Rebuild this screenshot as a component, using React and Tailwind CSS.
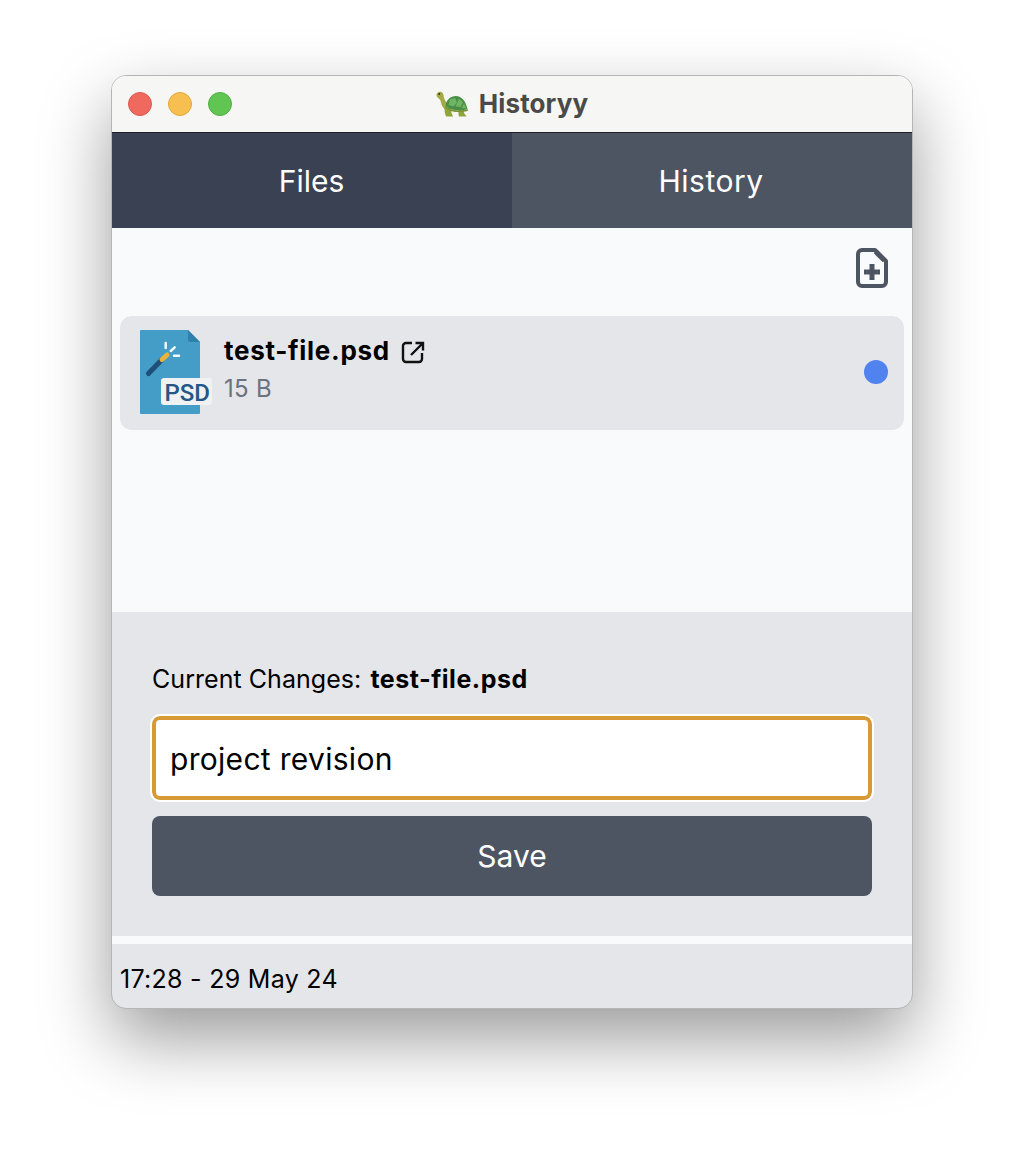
import { useState } from 'react';

function Turtle() {
  return (
    <svg width="32" height="26" viewBox="0 0 32 26" className="shrink-0">
      <path d="M.5 3.500C1 1.500 3.500 0 5.500 1c2 1 2 3 2.300 5 .4 2.500 2 4.500 3.700 6.500l-2 6.500c-3-2.500-4.500-6-5-9.500C3.500 7.500 0 6 .5 3.500z" fill="#a3ab45" />
      <path d="M8.500 17l6-1 1 6 1.500 3.500H10c-1-2.500-1.500-5-1.500-8.500zM22.500 18l5-.5.500 4.500 2.500 3.500H23c-.8-2.500-.5-5-.5-7.500z" fill="#8ca63c" />
      <path d="M9.500 15C10 9 14.500 5 20 5c5.500 0 9.500 5 11.500 13-7 2.500-15.500 2-22-3z" fill="#478f45" />
      <path d="M14 8.500l5-1.500 2 4.500-3.500 4-5-1.500zM23 7.500l4 4-2.500 4.500-5-.5 2-4zM28 12.500l2.500 5-5-.5z" fill="#6fb564" />
      <path d="M9.500 15c6.500 5 15 5.500 22 3l.5 2c-8 2-17 1.500-23-3z" fill="#7d9433" />
      <circle cx="3.300" cy="3" r=".9" fill="#222" />
    </svg>
  );
}

function PsdIcon() {
  return (
    <svg width="72" height="84" viewBox="0 0 72 84" className="shrink-0 font-[Roboto]">
      <path d="M1 0h47l12 12v71a1 1 0 0 1-1 1H1a1 1 0 0 1-1-1V1a1 1 0 0 1 1-1z" fill="#439dc7" />
      <path d="M48 0l12 12H50a2 2 0 0 1-2-2z" fill="#2f81ab" />
      <path d="M8.500 43.500L21.500 30" stroke="#1f4e79" strokeWidth="5" strokeLinecap="round" />
      <path d="M22 29.500L27 25" stroke="#eab33c" strokeWidth="5" strokeLinecap="round" />
      <path d="M25.700 13v5M30.700 21l4-3.700M34 25.700h5" stroke="#f4f7f9" strokeWidth="2.500" strokeLinecap="round" />
      <rect x="21" y="48" width="51" height="27" rx="3" fill="#eff1f3" />
      <text x="24.500" y="70.500" fontSize="24" fontWeight="500" fill="#235785">PSD</text>
    </svg>
  );
}

function NewFileIcon() {
  return (
    <svg width="32" height="40" viewBox="0 0 32 40" fill="none">
      <path d="M6 2h13l11 11v21a4 4 0 0 1-4 4H6a4 4 0 0 1-4-4V6a4 4 0 0 1 4-4z" stroke="#4e5562" strokeWidth="4" strokeLinejoin="round" />
      <path d="M19.500 3.500L28.500 12.500" stroke="#4e5562" strokeWidth="5" />
      <path d="M16 16v16M8 24h16" stroke="#4e5562" strokeWidth="5" />
    </svg>
  );
}

function ExternalIcon() {
  return (
    <svg width="24" height="24" viewBox="0 0 24 24" fill="none" className="shrink-0 mt-[2px]">
      <path d="M11 3H5A3 3 0 0 0 2 6v13a3 3 0 0 0 3 3h13a3 3 0 0 0 3-3v-6" stroke="#111" strokeWidth="2.400" />
      <path d="M14.500 3H22v7.500M21.500 3.500L10 15" stroke="#111" strokeWidth="2.400" />
    </svg>
  );
}

export default function App() {
  const [message, setMessage] = useState('project revision');

  return (
    <div className="w-[1024px] h-[1156px] bg-white pt-[76px] pl-[112px] overflow-hidden font-[Inter]">
      <div className="w-[800px] h-[932px] flex flex-col rounded-[14px] overflow-hidden bg-[#f9fafb] outline outline-1 outline-[#b5b5b5] shadow-[0_30px_70px_0px_rgba(0,0,0,0.4)]">
        {/* Title bar */}
        <div className="relative h-[57px] shrink-0 flex items-center justify-center bg-[#f6f6f4] border-b border-[#1d2029]">
          <div className="absolute left-[16px] top-[16px] flex gap-[16px]">
            <div className="w-[24px] h-[24px] rounded-full bg-[#f0695f] border border-[#dc5a50]" />
            <div className="w-[24px] h-[24px] rounded-full bg-[#f6bf50] border border-[#e0a93f]" />
            <div className="w-[24px] h-[24px] rounded-full bg-[#61c554] border border-[#50b044]" />
          </div>
          <div className="flex items-center gap-[11px]">
            <Turtle />
            <span className="text-[26px] leading-[30px] font-bold text-[#4a4a48] tracking-[0.1px]">Historyy</span>
          </div>
        </div>

        {/* Tabs */}
        <div className="h-[95px] shrink-0 flex text-white text-[30px]">
          <button className="w-[400px] bg-[#3a4152] pt-[1px] pr-[1px]">Files</button>
          <button className="w-[400px] bg-[#4e5562] pt-[1px] pr-[2px] tracking-[0.5px]">History</button>
        </div>

        {/* File list */}
        <div className="flex-1 px-[8px] pt-[20px]">
          <div className="flex justify-end pr-[16px]">
            <NewFileIcon />
          </div>
          <div className="mt-[28px] h-[114px] flex items-center rounded-[12px] bg-[#e5e6ea] pl-[20px] pr-[16px] pb-[2px]">
            <PsdIcon />
            <div className="ml-[12px] flex-1 -mt-[8px]">
              <div className="flex items-center gap-[11px] text-[26px] leading-[40px] font-bold tracking-[0.7px] text-black">
                test-file.psd
                <ExternalIcon />
              </div>
              <div className="text-[24px] leading-[32px] text-[#6b7280] tracking-[0.3px] mt-[2px]">15 B</div>
            </div>
            <div className="w-[24px] h-[24px] rounded-full bg-[#5082f0]" />
          </div>
        </div>

        {/* Commit form */}
        <div className="h-[324px] shrink-0 bg-[#e5e6ea] px-[40px] pt-[51px]">
          <div className="text-[25px] leading-[32px] tracking-[0.05px] text-black">
            Current Changes: <span className="ml-[2px] font-bold tracking-[0.5px]">test-file.psd</span>
          </div>
          <input
            value={message}
            onChange={(e) => setMessage(e.target.value)}
            className="mt-[21px] block w-full h-[84px] px-[14px] pt-[2px] rounded-[8px] bg-white border-[4px] border-[#d79a35] outline outline-2 outline-white text-[30px] tracking-[0.3px] text-black"
          />
          <button className="mt-[16px] block w-full h-[80px] pt-[1px] rounded-[8px] bg-[#4e5562] text-white text-[30px]">Save</button>
        </div>

        <div className="h-[8px] shrink-0" />

        {/* Status bar */}
        <div className="h-[64px] shrink-0 flex items-center bg-[#e5e6ea] px-[8px] pt-[8px] text-[25px] tracking-[0.28px] text-black">
          17:28 - 29 May 24
        </div>
      </div>
    </div>
  );
}
